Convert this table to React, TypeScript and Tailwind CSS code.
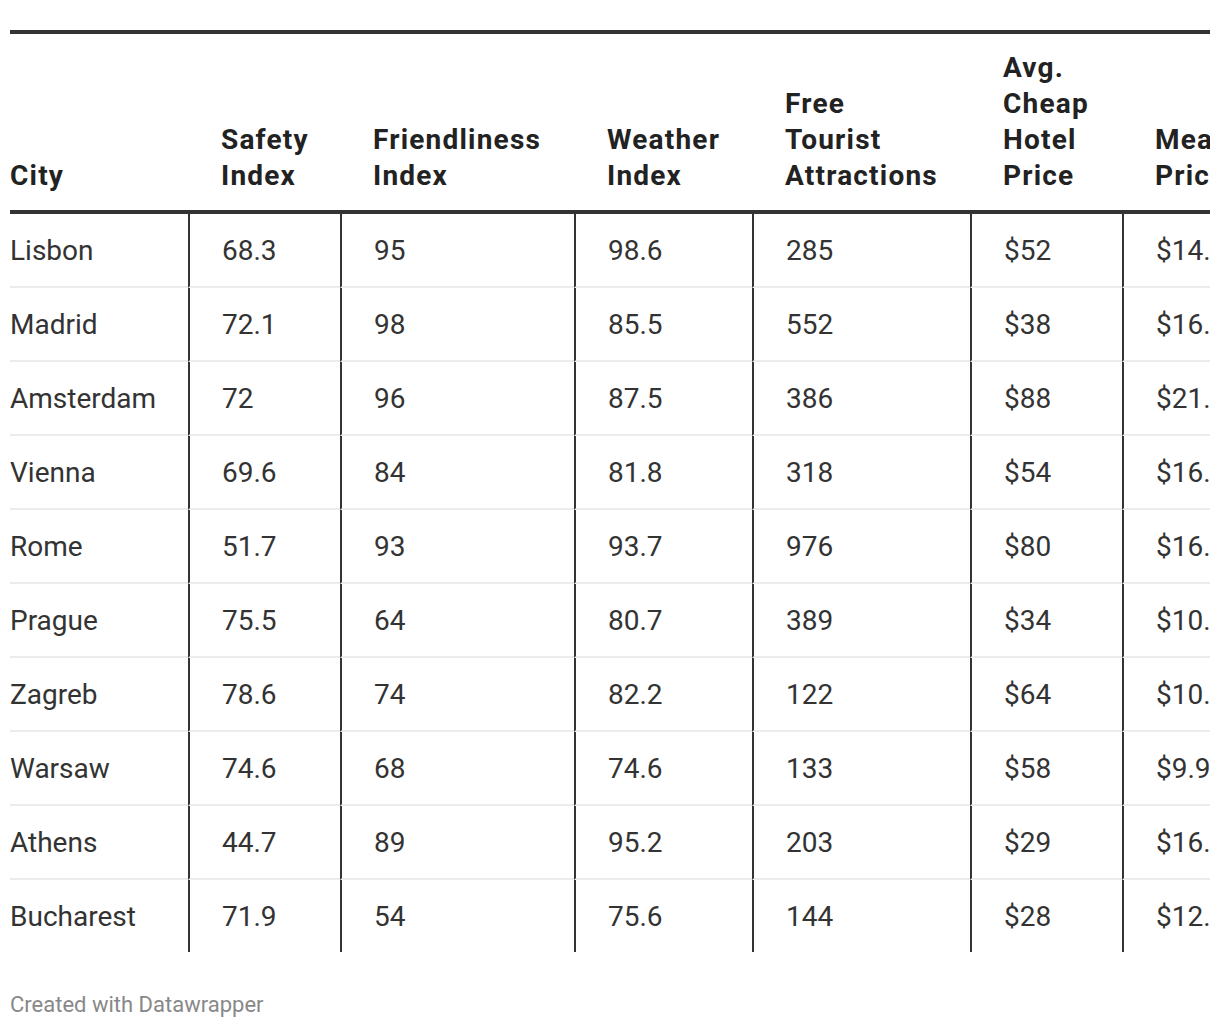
const columns = [
  { key: "city", lines: ["City"], width: 178 },
  { key: "safety", lines: ["Safety", "Index"], width: 152 },
  { key: "friendly", lines: ["Friendliness", "Index"], width: 234 },
  { key: "weather", lines: ["Weather", "Index"], width: 178 },
  { key: "free", lines: ["Free", "Tourist", "Attractions"], width: 218 },
  { key: "hotel", lines: ["Avg.", "Cheap", "Hotel", "Price"], width: 152 },
  { key: "meal", lines: ["Meal", "Price"], width: 190 },
];

const rows = [
  ["Lisbon", "68.3", "95", "98.6", "285", "$52", "$14.50"],
  ["Madrid", "72.1", "98", "85.5", "552", "$38", "$16.20"],
  ["Amsterdam", "72", "96", "87.5", "386", "$88", "$21.60"],
  ["Vienna", "69.6", "84", "81.8", "318", "$54", "$16.30"],
  ["Rome", "51.7", "93", "93.7", "976", "$80", "$16.10"],
  ["Prague", "75.5", "64", "80.7", "389", "$34", "$10.80"],
  ["Zagreb", "78.6", "74", "82.2", "122", "$64", "$10.90"],
  ["Warsaw", "74.6", "68", "74.6", "133", "$58", "$9.90"],
  ["Athens", "44.7", "89", "95.2", "203", "$29", "$16.40"],
  ["Bucharest", "71.9", "54", "75.6", "144", "$28", "$12.30"],
];

export default function App() {
  return (
    <div
      className="min-h-screen bg-white pt-[30px]"
      style={{ fontFamily: "Roboto, 'Liberation Sans', sans-serif" }}
    >
      {/* table is wider than the frame, clipped on the right */}
      <div className="ml-[10px] w-[1200px] overflow-hidden">
        <table className="table-fixed border-separate border-spacing-0 w-[1302px]">
          <colgroup>
            {columns.map((c) => (
              <col key={c.key} style={{ width: c.width }} />
            ))}
          </colgroup>
          <thead>
            <tr>
              {columns.map((c, i) => (
                <th
                  key={c.key}
                  className={`border-t-4 border-b-4 border-[#333333] pt-[16px] pb-[16px] pr-[12px] text-left align-bottom text-[28px] leading-[36px] font-bold tracking-[1.2px] text-[#222222] whitespace-nowrap ${
                    i === 0 ? "pl-0" : "pl-[33px]"
                  }`}
                >
                  {c.lines.map((l, j) => (
                    <div key={j}>{l}</div>
                  ))}
                </th>
              ))}
            </tr>
          </thead>
          <tbody>
            {rows.map((r, ri) => (
              <tr key={r[0]}>
                {r.map((v, ci) => (
                  <td
                    key={ci}
                    className={`pt-[19px] pb-[17px] pr-[30px] text-[28px] leading-[36px] text-[#333333] whitespace-nowrap ${
                      ci === 0 ? "pl-0" : "pl-[32px] border-l-2 border-l-[#333333]"
                    } ${ri < rows.length - 1 ? "border-b-2 border-b-[#ececec]" : ""}`}
                  >
                    {v}
                  </td>
                ))}
              </tr>
            ))}
          </tbody>
        </table>
      </div>
      <div className="ml-[10px] mt-[40px] text-[22px] leading-[26px] text-[#888888]">
        Created with Datawrapper
      </div>
    </div>
  );
}
